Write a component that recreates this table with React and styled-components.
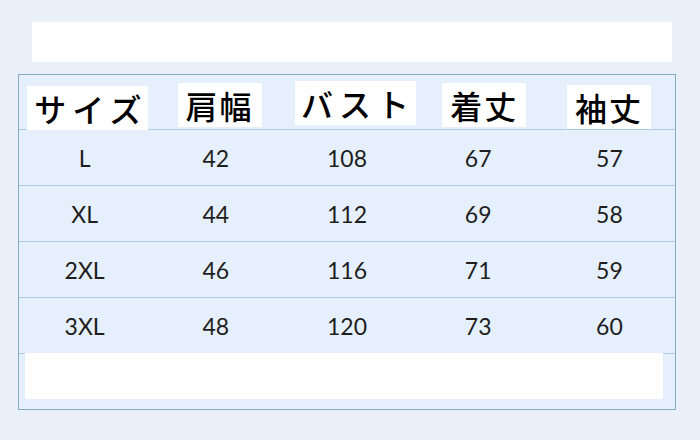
import styled, { createGlobalStyle } from "styled-components";

const GlobalStyle = createGlobalStyle`
    html, body {
        margin: 0;
        padding: 0;
        background: #e9f0fa;
    }
`;

const headers = [
    { label: "サイズ", top: 11, dx: 4, width: 121, spaced: true },
    { label: "肩幅", top: 8, dx: 6, width: 84 },
    { label: "バスト", top: 6, dx: 8, width: 121, spaced: true },
    { label: "着丈", top: 8, dx: 4, width: 84 },
    { label: "袖丈", top: 10, dx: -1, width: 84 },
];

const rows = [
    ["L", "42", "108", "67", "57"],
    ["XL", "44", "112", "69", "58"],
    ["2XL", "46", "116", "71", "59"],
    ["3XL", "48", "120", "73", "60"],
];

export default function App(){
    return(
    <>
        <GlobalStyle />
        <Page>
            <TopBar />
            <Table>
                <HeaderRow>
                    {headers.map((h) => (
                        <HeaderLabel key={h.label} $top={h.top} $dx={h.dx} $width={h.width} $spaced={h.spaced}>
                            {h.label}
                        </HeaderLabel>
                    ))}
                </HeaderRow>
                {rows.map((row) => (
                    <Row key={row[0]}>
                        {row.map((cell, i) => (
                            <Cell key={i}>{cell}</Cell>
                        ))}
                    </Row>
                ))}
                <Footer>
                    <FooterBar />
                </Footer>
            </Table>
        </Page>
    </>
    );
}

const Page = styled.div`
    width: 700px;
    height: 440px;
    padding-top: 22px;
    box-sizing: border-box;
    background: #e9f0fa;
    overflow: hidden;
`;

const TopBar = styled.div`
    width: 640px;
    height: 40px;
    margin-left: 32px;
    background: #ffffff;
`;

const Table = styled.div`
    width: 658px;
    height: 336px;
    margin-top: 12px;
    margin-left: 18px;
    box-sizing: border-box;
    border: 1.5px solid #86adc2;
    background: #e6f0fc;
    display: flex;
    flex-direction: column;
`;

const Grid = styled.div`
    display: grid;
    grid-template-columns: repeat(5, 1fr);
    height: 56px;
    box-sizing: border-box;
    border-bottom: 1px solid #b0cbe8;
`;

const HeaderRow = styled(Grid)`
    align-items: start;
    height: 55px;
`;

const HeaderLabel = styled.div`
    justify-self: center;
    width: ${(p) => p.$width}px;
    margin-top: ${(p) => p.$top}px;
    margin-left: ${(p) => p.$dx * 2}px;
    height: 44px;
    padding-left: ${(p) => (p.$spaced ? 6 : 0)}px;
    box-sizing: border-box;
    background: #ffffff;
    display: flex;
    align-items: center;
    justify-content: center;
    white-space: nowrap;
    font-family: "Noto Sans CJK JP", "Noto Sans", sans-serif;
    font-size: 32px;
    font-weight: 500;
    letter-spacing: ${(p) => (p.$spaced ? "6px" : "2px")};
    color: #000000;
`;

const Row = styled(Grid)``;

const Cell = styled.div`
    display: flex;
    align-items: center;
    justify-content: center;
    font-family: "Lato", "Open Sans", sans-serif;
    font-size: 23px;
    color: #1e1e1e;
`;

const Footer = styled.div`
    flex: 1;
    padding: 0 12px 8px 6px;
`;

const FooterBar = styled.div`
    height: 46px;
    margin-top: -1px;
    background: #ffffff;
`;
